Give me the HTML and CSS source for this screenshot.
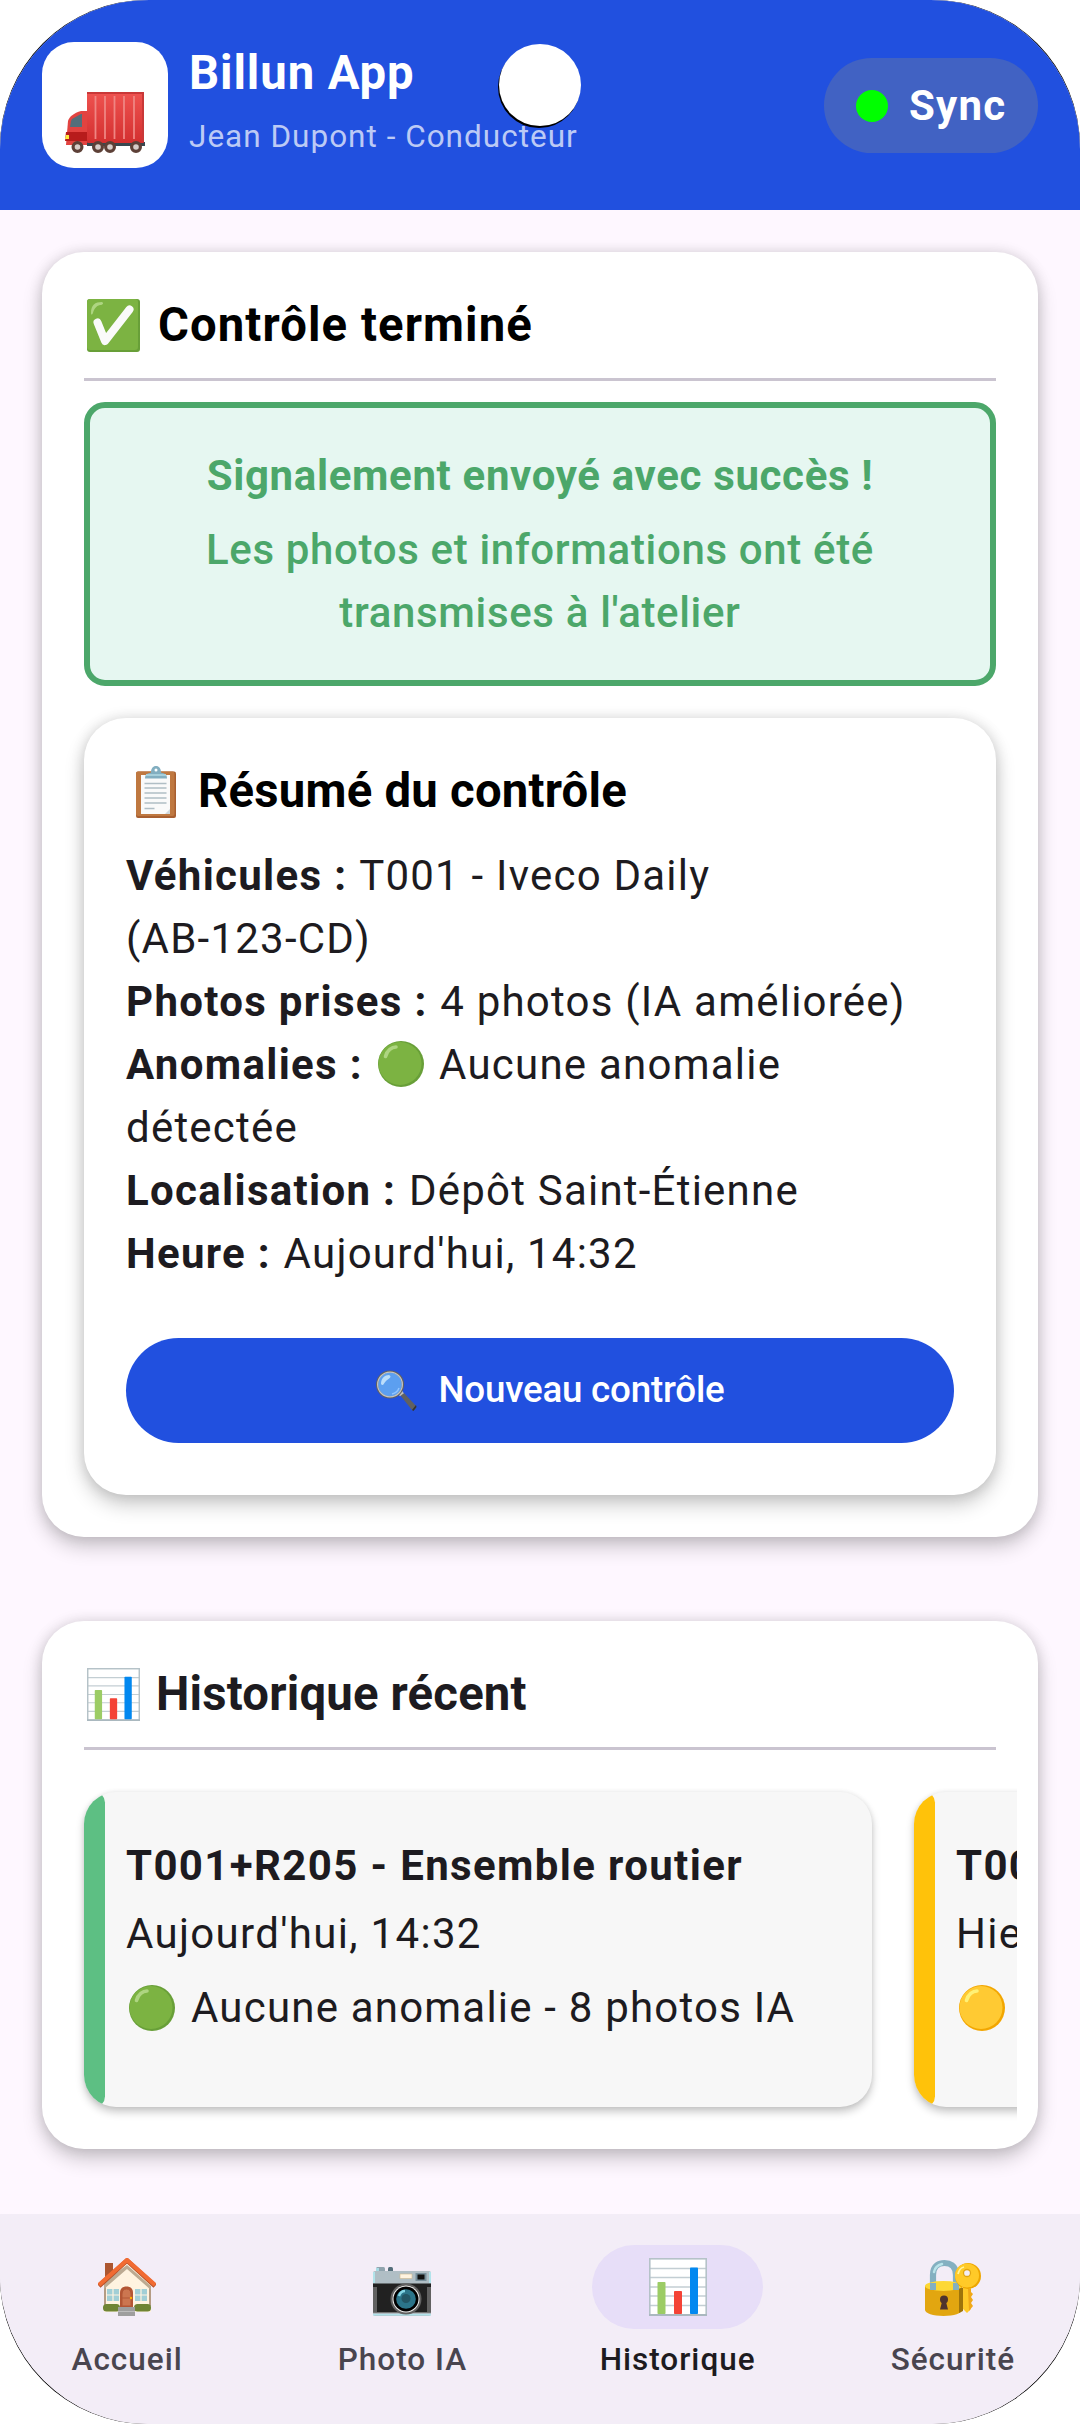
FILE: index.html
```html
<!DOCTYPE html>
<html lang="fr">
<head>
<meta charset="utf-8">
<title>Billun App</title>
<link rel="stylesheet" href="styles.css">
</head>
<body>
<svg class="defs" aria-hidden="true">
  <defs>
    <linearGradient id="box-red" x1="0" y1="0" x2="0" y2="1"><stop offset="0" stop-color="#ef5350"/><stop offset="1" stop-color="#d32f2f"/></linearGradient>
    <symbol id="chart" viewBox="0 0 58 58">
      <rect x="1" y="1" width="56" height="56" fill="#fff"/>
      <path d="M1 10.500h56M1 19.500h56M1 29h56M1 38h56M1 47.500h56" stroke="#c3ced3" stroke-width="1.300"/>
      <rect x=".8" y=".8" width="56.400" height="56.400" fill="none" stroke="#b5c2c8" stroke-width="1.600"/>
      <path d="M0 57h58" stroke="#aab8bf" stroke-width="2"/>
      <rect x="8.500" y="24" width="8" height="32" rx=".8" fill="#9ccc65"/>
      <rect x="25" y="33" width="8" height="23" rx=".8" fill="#f44336"/>
      <rect x="41" y="9.500" width="8" height="46.500" rx=".8" fill="#0288f0"/>
    </symbol>
    <symbol id="ball" viewBox="0 0 46 46">
      <circle cx="23" cy="23" r="23" class="ball-edge"/>
      <circle cx="22" cy="22.500" r="21.500" class="ball-fill"/>
      <path d="M7.500 15.500C9 9 14 6 18 6" class="ball-shine" fill="none" stroke-width="3.600" stroke-linecap="round"/>
    </symbol>
  </defs>
</svg>
<div class="device">
<div class="screen">
  <header class="topbar">
    <div class="logo">
      <svg width="80" height="62" viewBox="0 0 80 62">
        <path d="M22 50h58v4H22z" fill="#37474f"/>
        <path d="M22 19h-6C9 21 4 25 3 29L1 53h21z" fill="#e24340"/>
        <path d="M7 27l9-5h1v13H5l1-6z" fill="#546e7a"/>
        <path d="M1 40h21v9H0z" fill="#b71c1c"/>
        <path d="M1 43h3v4H0z" fill="#ffeb3b"/>
        <rect x="22" y="0" width="57" height="51" rx="1" fill="url(#box-red)"/>
        <path d="M22 1h57M78 1v49" stroke="#c93838" stroke-width="2"/>
        <path d="M30.500 4v43M40 4v43M49.500 4v43M59 4v43M69 4v43" stroke="#ef8582" stroke-width="1.800"/>
        <g fill="#d7ccc8" stroke="#5d4037" stroke-width="3.200"><circle cx="12.500" cy="55" r="4.400"/><circle cx="33" cy="55" r="4.400"/><circle cx="45" cy="55" r="4.400"/><circle cx="71" cy="55" r="4.400"/></g>
      </svg>
    </div>
    <div class="ident">
      <div class="app-name">Billun App</div>
      <div class="user">Jean Dupont - Conducteur</div>
    </div>
    <div class="sync"><i class="dot"></i>Sync</div>
    <i class="camera"></i>
  </header>

  <main class="content">
    <section class="card">
      <h2 class="card-title done">
        <svg width="53" height="53" viewBox="0 0 53 53">
          <rect width="53" height="53" rx="3" fill="#689f38"/><rect width="51" height="51" rx="3" fill="#7cb342"/>
          <path d="M4 14C4 6 8 3 15 3c2 1 1 3-2 3-4 1-6 4-7 8-1 2-2 2-2 0z" fill="#aed581"/>
          <path d="M10.500 23.500L18 42 42.500 10.500" fill="none" stroke="#fafafa" stroke-width="8" stroke-linecap="round" stroke-linejoin="round"/>
        </svg>
        <span>Contrôle terminé</span>
      </h2>
      <div class="alert">
        <p class="alert-head">Signalement envoyé avec succès !</p>
        <p class="alert-text">Les photos et informations ont été<br>transmises à l'atelier</p>
      </div>
      <div class="card summary">
        <h3 class="summary-title">
          <svg width="40" height="52" viewBox="0 0 40 52">
            <rect y="5.500" width="40" height="46.500" rx="2" fill="#a85f30"/><rect x="0" y="5.500" width="38.500" height="44.500" rx="2" fill="#bf7840"/>
            <path d="M5 9h29v39H5z" fill="#fafafa"/><path d="M29 48l5-5v5z" fill="#cfd8dc"/>
            <path d="M8.500 17.500h22M8.500 22h22M8.500 27h22M8.500 32h22M8.500 37h22M8.500 42.500h10" stroke="#b0bec5" stroke-width="1.400"/>
            <path d="M9 12.500c0-4 2-5 6-6 0-4 2-6.500 5-6.500s5 2.500 5 6.500c4 1 6 2 6 6z" fill="#82aec0"/><path d="M10 9h20" stroke="#a6cfdb" stroke-width="2"/><circle cx="20" cy="4" r="1.500" fill="#fff"/>
          </svg>
          <span>Résumé du contrôle</span>
        </h3>
        <div class="facts">
          <p><b>Véhicules :</b> T001 - Iveco Daily<br>(AB-123-CD)</p>
          <p><b>Photos prises :</b> 4 photos (IA améliorée)</p>
          <p><b>Anomalies :</b> <svg class="ball green" width="46" height="46"><use href="#ball"/></svg> Aucune anomalie<br>détectée</p>
          <p><b>Localisation :</b> Dépôt Saint-Étienne</p>
          <p><b>Heure :</b> Aujourd'hui, 14:32</p>
        </div>
        <button class="primary">
          <svg width="41" height="41" viewBox="0 0 41 41">
            <path d="M24 25l4-2 12 13c1 2-2 5-4 4z" fill="#616161"/><path d="M36 40l4-5 .5 2-3 4z" fill="#333"/><path d="M23 25l4-3" stroke="#bdbdbd" stroke-width="3"/>
            <circle cx="14" cy="14.500" r="13" fill="#5c9ff0" stroke="#616161" stroke-width="2.200"/><circle cx="14" cy="14.500" r="12.400" fill="none" stroke="#c4c4c4" stroke-width="1.200"/>
            <path d="M5 14c0-6 4-9 8-9 4 2-1 4-3 6s-3 6-5 3z" fill="#bbdefb"/><path d="M16 24c4-1 6-3 7-6" fill="none" stroke="#90c4ff" stroke-width="1.500"/>
          </svg>
          <span>Nouveau contrôle</span>
        </button>
      </div>
    </section>

    <section class="card recent">
      <h2 class="card-title">
        <svg width="53" height="53"><use href="#chart"/></svg>
        <span>Historique récent</span>
      </h2>
      <div class="carousel">
        <article class="entry ok">
          <h4>T001+R205 - Ensemble routier</h4>
          <p class="when">Aujourd'hui, 14:32</p>
          <p class="state"><svg class="ball green" width="46" height="46"><use href="#ball"/></svg><span>Aucune anomalie - 8 photos IA</span></p>
        </article>
        <article class="entry warn">
          <h4>T002</h4>
          <p class="when">Hier</p>
          <p class="state"><svg class="ball yellow" width="46" height="46"><use href="#ball"/></svg></p>
        </article>
      </div>
    </section>
  </main>

  <nav class="tabs">
    <a class="tab"><span class="pill"><svg width="58" height="58" viewBox="0 0 58 58">
      <path d="M7 5h8v17H7z" fill="#ac5630"/><path d="M6 25v29h47V25L29 5z" fill="#fff3e0"/><path d="M7 28v20M52 28v20" stroke="#8d6e55" stroke-width="1.300"/>
      <path d="M6 24L29 7l24 21v4L29 11 6 31z" fill="#bcaa92"/>
      <path d="M1 28L29 2.500 57 28" fill="none" stroke="#b4502a" stroke-width="4.500"/><path d="M1 27L29 2 57 27" fill="none" stroke="#f16b32" stroke-width="4.200"/>
      <path d="M9 31h12v12H9zM37 31h12v12H37z" fill="#a2cfd6"/><path d="M15 31v12M9 37h12M43 31v12M37 37h12" stroke="#fff3e0" stroke-width="1.200"/>
      <path d="M22 49V35c0-4 2-6.500 6.500-6.500S35 31 35 35v14z" fill="#b35634"/><path d="M24 48V36c0-3 1.500-5 4.500-5s4.500 2 4.500 5v12zM24 40h9" fill="#cc7650" stroke="#b35634"/><circle cx="33" cy="40" r="1.200" fill="#ffb300"/>
      <rect x="5" y="46" width="17" height="7.500" rx="3.500" fill="#6f8434"/><rect x="36" y="46" width="17" height="7.500" rx="3.500" fill="#6f8434"/><path d="M20 49h17v9H20z" fill="#9e9e9e"/><path d="M20 53.500h17" stroke="#bdbdbd"/>
    </svg></span><span class="label">Accueil</span></a>
    <a class="tab"><span class="pill"><svg width="58" height="58" viewBox="0 0 58 58">
      <rect x="3" y="9" width="9" height="6" rx="1.500" fill="#90a4ae"/><path d="M3 10h3v4H3z" fill="#a8dbe4"/><rect x="15" y="9" width="5" height="5" rx="1.500" fill="#546e7a"/>
      <rect x="0" y="13" width="58" height="45" rx="2" fill="#b0bec5"/><path d="M0 14h2v11H0zM56 14h2v11h-2zM0 56h58v1.500H0z" fill="#b2e3eb"/>
      <path d="M0 25.500h58V55H0z" fill="#212121"/><path d="M0 29h4v26H0zM54 29h4v26h-4z" fill="#616161"/><path d="M0 54.500h58" stroke="#757575"/>
      <path d="M27 16h12v4.500H27z" fill="#fff3e0" stroke="#cfb991" stroke-width=".6"/><rect x="42.500" y="15" width="11" height="8" fill="#78909c"/><path d="M44.500 16.500h7v5h-7z" fill="#111"/>
      <circle cx="33" cy="41" r="15.500" fill="#616161"/><circle cx="33" cy="41" r="13.500" fill="#eee"/><circle cx="33" cy="41" r="12.500" fill="#000"/><circle cx="33" cy="41" r="9.800" fill="#2b7489"/><circle cx="33" cy="40.500" r="4.500" fill="#235665"/><path d="M26 38c1-3 3-5 6-5" stroke="#83d4e4" stroke-width="2.500" fill="none"/>
    </svg></span><span class="label">Photo IA</span></a>
    <a class="tab active"><span class="pill"><svg width="58" height="58"><use href="#chart"/></svg></span><span class="label">Historique</span></a>
    <a class="tab"><span class="pill"><svg width="58" height="58" viewBox="0 0 58 58">
      <path d="M9 29V17C9 7 16 5 20.500 5S32 7 32 17v12" fill="none" stroke="#84b0c1" stroke-width="6.200"/><path d="M10 14c1-5 4-7 8-8" fill="none" stroke="#b9e4ea" stroke-width="2.500" stroke-linecap="round"/>
      <path d="M1 28v24c0 3 8 6 18.500 6S38 55 38 52V28z" fill="#e2a610"/><path d="M35 30h4v23l-4 2z" fill="#9e740b"/><ellipse cx="19.500" cy="28" rx="18.500" ry="5" fill="#fdd835"/><path d="M6 25h6v7H6zM29 25h6v7h-6z" fill="#84b0c1"/>
      <circle cx="20" cy="41.500" r="4" fill="#4e342e"/><path d="M18.500 42h3l2.500 9.500h-8z" fill="#4e342e"/>
      <path d="M39 28h8v23l-4 4-4-4z" fill="#ffca28"/><path d="M47 31v3l2 2-2 3 2 3-2 3 2 3-4 5-1-22z" fill="#f0a817"/><circle cx="44" cy="18" r="13" fill="#eda600"/><circle cx="43" cy="17.500" r="12" fill="#ffca28"/><circle cx="43" cy="15" r="3.500" fill="#f3edf7" stroke="#e2a610" stroke-width="1.300"/><path d="M34 16c1-4 2-6 6-7" fill="none" stroke="#fff59d" stroke-width="1.800"/>
    </svg></span><span class="label">Sécurité</span></a>
  </nav>
</div>
</div>
</body>
</html>
```
FILE: styles.css
```css
* { box-sizing: border-box; }
body { margin: 0; background: #fff; font-family: Roboto, "Liberation Sans", sans-serif; font-size: 42px; line-height: 63px; color: #1d1b20; }
h2, h3, h4, p { margin: 0; font-size: inherit; font-weight: inherit; }
svg { display: block; flex: none; }
.defs { position: absolute; width: 0; height: 0; }

/* The black device edge shows as a hairline around the rounded corners. */
.device { width: 1080px; height: 2424px; background: #000; border-radius: 147px; }
.screen { height: 2424px; display: flex; flex-direction: column; background: #fef7ff; border-radius: 149px; overflow: hidden; }

.topbar { position: relative; flex: none; height: 210px; padding: 42px 42px 0; display: flex; align-items: flex-start; background: #2150df; color: #fff; }
.logo { width: 126px; height: 126px; border-radius: 32px; background: #fff; padding: 50px 0 0 23px; }
.ident { flex: 1; margin-left: 21px; white-space: nowrap; }
.app-name { font-size: 47.25px; font-weight: 700; letter-spacing: .9px; }
.user { margin-top: 11px; font-size: 31.5px; line-height: 42px; letter-spacing: 1px; color: #bccaf5; }
.sync { width: 214px; height: 95px; margin-top: 16px; padding-left: 32px; display: flex; align-items: center; gap: 21px; border-radius: 48px; background: #4162c3; font-weight: 700; letter-spacing: 1.2px; }
.dot { width: 32px; height: 32px; border-radius: 50%; background: #0f0; }
.camera { position: absolute; left: 499px; top: 44px; width: 82px; height: 82px; border-radius: 50%; background: #fff; box-shadow: -1px 2px 0 #000; }

.content { flex: 1; padding: 42px 42px 0; }
.card { background: #fff; border-radius: 42px; padding: 42px; box-shadow: 0 10px 20px rgba(0,0,0,.2), 0 0 14px rgba(0,0,0,.13); }
.card-title { display: flex; align-items: center; gap: 16px; height: 87px; padding: 0 0 21px 3px; border-bottom: 3px solid #cac4d0; font-size: 47.25px; font-weight: 700; letter-spacing: .2px; }
.done { gap: 18px; color: #000; letter-spacing: 1.1px; }

.alert { height: 284px; margin-top: 21px; padding: 36px 0; border: 6px solid #4ca76a; border-radius: 21px; background: #e6f7f1; color: #4ca76a; text-align: center; letter-spacing: .656px; }
.alert-head { font-weight: 700; }
.alert-text { margin-top: 11px; font-weight: 500; }

.summary { height: 777px; margin-top: 32px; }
.summary-title { display: flex; align-items: center; gap: 22px; padding-left: 10px; font-size: 47.25px; font-weight: 700; letter-spacing: .25px; color: #000; }
.facts { margin-top: 21px; letter-spacing: 1.22px; white-space: nowrap; }
.facts b { margin-right: 1px; font-weight: 700; letter-spacing: 1.31px; }
.ball { overflow: visible; }
.facts .ball { display: inline-block; vertical-align: -8px; margin: 0 3px; }
.green { --edge: #689f38; --fill: #7cb342; --shine: #aed581; }
.yellow { --edge: #f2a600; --fill: #ffca33; --shine: #fff176; }
.ball-edge { fill: var(--edge); }
.ball-fill { fill: var(--fill); }
.ball-shine { stroke: var(--shine); }
.primary { width: 100%; height: 105px; margin-top: 53px; padding: 0 0 0 21px; display: flex; align-items: center; justify-content: center; gap: 21px; border: 0; border-radius: 53px; background: #2150df; color: #fff; font: 500 36.75px/1 Roboto, "Liberation Sans", sans-serif; letter-spacing: -.22px; }

.recent { height: 528px; margin-top: 84px; }
.carousel { display: flex; gap: 42px; margin: 0 -21px 0 -42px; padding: 42px 0 30px 42px; overflow: hidden; }
.entry { position: relative; flex: none; width: 788px; height: 315px; padding: 42px 0 0 42px; border-radius: 32px; background: #f7f7f7; white-space: nowrap; letter-spacing: 1.31px; box-shadow: 0 5px 9px rgba(0,0,0,.22), 0 0 5px rgba(0,0,0,.08); overflow: hidden; }
.entry::before { content: ""; position: absolute; left: 0; top: 0; bottom: 0; width: 21px; border-radius: 0 10.5px 10.5px 0; background: var(--bar); }
.ok { --bar: #5dbf83; }
.warn { --bar: #ffc20a; }
.entry h4 { font-weight: 700; letter-spacing: 1.36px; }
.when { margin-top: 5px; }
.state { display: flex; align-items: center; gap: 16px; height: 63px; margin-top: 11px; padding-left: 3px; letter-spacing: 1.2px; }

.tabs { flex: none; height: 210px; padding-top: 31px; display: grid; grid-template-columns: repeat(4, 1fr); column-gap: 21px; background: #f3edf7; color: #49454f; }
.tab { display: flex; flex-direction: column; align-items: center; }
.pill { width: 171px; height: 84px; display: grid; place-items: center; border-radius: 42px; }
.active .pill { background: #e7def8; }
.active { color: #1d1b20; }
.label { margin-top: 10px; font-size: 31.5px; line-height: 42px; font-weight: 500; letter-spacing: 1px; }
```
